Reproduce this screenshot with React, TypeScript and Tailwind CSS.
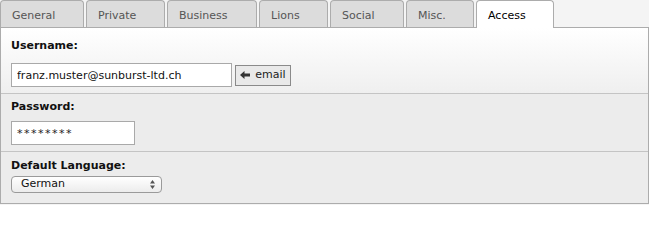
import { useState } from "react";

const tabs = [
  { label: "General", w: "w-[84px]" },
  { label: "Private", w: "w-[79px]" },
  { label: "Business", w: "w-[90px]" },
  { label: "Lions", w: "w-[69px]" },
  { label: "Social", w: "w-[74px]" },
  { label: "Misc.", w: "w-[68px]" },
  { label: "Access", w: "w-[78px]" },
];

const font = { fontFamily: '"DejaVu Sans", Verdana, sans-serif' };

const ArrowLeft = () => (
  <svg width="10" height="8" viewBox="0 0 10 8" aria-hidden="true">
    <path d="M0 4 L4.5 0 V2.5 H10 V5.5 H4.5 V8 Z" fill="#333" />
  </svg>
);

const App = () => {
  const [active, setActive] = useState("Access");

  return (
    <div className="w-[649px] h-[205px] bg-[#f4f4f4] text-[11px] text-[#111]" style={font}>
      {/* Tabs */}
      <div className="flex gap-[2px] h-[28px] items-start relative z-10">
        {tabs.map((t) => {
          const on = t.label === active;
          return (
            <button
              key={t.label}
              onClick={() => setActive(t.label)}
              className={`${t.w} flex items-start pl-[11px] pt-[8px] leading-[14px] rounded-t-[4px] border border-b-0 border-[#acacac] ${
                on ? "h-[28px] bg-white text-black" : "h-[27px] bg-[#dcdcdc] text-[#555]"
              }`}
            >
              {t.label}
            </button>
          );
        })}
      </div>

      {/* Panel */}
      <div className="-mt-px border border-[#acacac] w-[649px] h-[177px] flex flex-col">
        <div className="h-[66px] bg-gradient-to-b from-white to-[#efefef] px-[10px] pt-[11px] border-b border-[#c4c4c4]">
          <div className="font-bold leading-[14px] h-[14px]">Username:</div>
          <div className="flex items-center gap-[3px] mt-[10px]">
            <input
              className="w-[221px] h-[24px] border border-[#a9a9a9] bg-white px-[5px] text-[11px] text-[#111] outline-none"
              style={font}
              defaultValue="franz.muster@sunburst-ltd.ch"
            />
            <button className="w-[56px] h-[21px] border border-[#8a8a8a] bg-[#e9e9e9] flex items-center justify-center gap-[5px] text-[#222]">
              <ArrowLeft />
              <span>email</span>
            </button>
          </div>
        </div>

        <div className="h-[58px] bg-[#ececec] px-[10px] pt-[6px] border-b border-[#c4c4c4]">
          <div className="font-bold leading-[14px] h-[14px]">Password:</div>
          <input
            className="mt-[7px] w-[124px] h-[24px] border border-[#a9a9a9] bg-white px-[5px] text-[11px] tracking-[1.5px] text-[#222] outline-none"
            style={font}
            defaultValue="********"
          />
        </div>

        <div className="flex-1 bg-[#ececec] px-[10px] pt-[7px]">
          <div className="font-bold leading-[14px] h-[14px]">Default Language:</div>
          <div className="mt-[3px] w-[151px] h-[17px] rounded-[4px] border border-[#9a9a9a] bg-gradient-to-b from-white to-[#ececec] flex items-center justify-between pl-[9px] pr-[6px]">
            <span className="text-[#111]">German</span>
            <svg width="5" height="9" viewBox="0 0 5 9" aria-hidden="true">
              <path d="M2.5 0 L5 3.5 H0 Z M2.5 9 L0 5.5 H5 Z" fill="#555" />
            </svg>
          </div>
        </div>
      </div>
    </div>
  );
};

export default App;
